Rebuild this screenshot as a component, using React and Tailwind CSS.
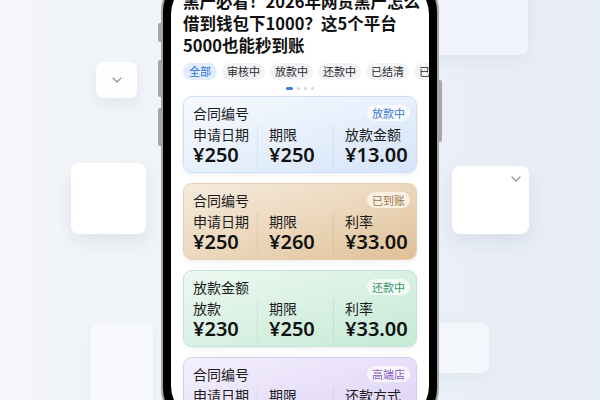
import React from "react";

const cjk = { fontFamily: '"Noto Sans CJK SC", "Noto Sans", sans-serif' };
const num = { fontFamily: '"Noto Sans", "Noto Sans CJK SC", sans-serif' };

function Chevron({ className }) {
  return (
    <svg className={className} width="10" height="6" viewBox="0 0 10 6" fill="none">
      <polyline points="1,1 5,5 9,1" stroke="#8f959d" strokeWidth="1.2" strokeLinecap="round" strokeLinejoin="round" />
    </svg>
  );
}

const cards = [
  {
    title: "合同编号",
    badge: "放款中",
    badgeCls: "text-[#3a78d4] bg-white/75",
    cls: "bg-gradient-to-br from-[#f7faff] via-[#e7f0fc] to-[#d4e4f9] border-[#cddff5]",
    cols: [["申请日期", "¥250"], ["期限", "¥250"], ["放款金额", "¥13.00"]],
  },
  {
    title: "合同编号",
    badge: "已到账",
    badgeCls: "text-[#9a7448] bg-[#fbf4ea]/85",
    cls: "bg-gradient-to-br from-[#f5ebdd] via-[#ecd8bd] to-[#dfc096] border-[#e6cfae]",
    cols: [["申请日期", "¥250"], ["期限", "¥260"], ["利率", "¥33.00"]],
  },
  {
    title: "放款金额",
    badge: "还款中",
    badgeCls: "text-[#3c9563] bg-white/70",
    cls: "bg-gradient-to-br from-[#edf8f2] via-[#d9f1e4] to-[#c5ead5] border-[#c0e4d0]",
    cols: [["放款", "¥230"], ["期限", "¥250"], ["利率", "¥33.00"]],
  },
  {
    title: "合同编号",
    badge: "高端店",
    badgeCls: "text-[#8a5cc6] bg-white/70",
    cls: "bg-gradient-to-br from-[#f4f0fd] via-[#e8e0f9] to-[#dcd0f5] border-[#d8cbf0]",
    cols: [["申请日期", "¥250"], ["期限", "¥250"], ["还款方式", "¥33.00"]],
  },
];

function Card({ c }) {
  return (
    <div className={`h-[77px] shrink-0 rounded-[9px] border px-[9px] pt-[7px] pb-[6px] shadow-[0_2px_4px_rgba(60,80,110,0.08)] ${c.cls}`}>
      <div className="flex h-[18px] items-center justify-between">
        <span className="text-[14px] leading-[18px] text-[#1c1c1c]" style={cjk}>{c.title}</span>
        <span className={`mr-[-3px] rounded-full px-[5px] text-[11px] leading-[16px] ${c.badgeCls}`} style={cjk}>{c.badge}</span>
      </div>
      <div className="mt-[3px] grid grid-cols-[64px_76px_1fr]">
        {c.cols.map(([l, v], i) => (
          <div key={i} className={i === 0 ? "" : "border-l border-black/[0.06] pl-[11px]"}>
            <div className="text-[14px] leading-[18px] text-[#1c1c1c]" style={cjk}>{l}</div>
            <div className="text-[20px] font-semibold leading-[24px] text-[#111]" style={num}>{v}</div>
          </div>
        ))}
      </div>
    </div>
  );
}

export default function App() {
  const tabs = ["审核中", "放款中", "还款中", "已结清", "已逾期"];
  return (
    <div className="relative flex h-[400px] w-[600px] justify-center overflow-hidden bg-gradient-to-r from-[#f4f6f9] via-[#eef2f7] to-[#e7edf6]">
      {/* decorative floating tiles */}
      <div className="absolute left-[96px] top-[62px] flex h-[36px] w-[41px] items-center justify-center rounded-[7px] bg-white/90 shadow-[0_6px_14px_rgba(120,140,170,0.14)]">
        <Chevron />
      </div>
      <div className="absolute left-[71px] top-[163px] h-[71px] w-[75px] rounded-[8px] bg-white shadow-[0_8px_18px_rgba(120,140,170,0.16)]" />
      <div className="absolute left-[91px] top-[323px] h-[90px] w-[62px] rounded-[8px] bg-[#f7f9fc] shadow-[0_6px_16px_rgba(120,140,170,0.08)]" />
      <div className="absolute left-[420px] top-[-20px] h-[75px] w-[108px] rounded-[8px] bg-[#f0f4fa] shadow-[0_6px_16px_rgba(120,140,170,0.1)]" />
      <div className="absolute left-[452px] top-[166px] h-[68px] w-[77px] rounded-[8px] bg-white shadow-[0_8px_18px_rgba(120,140,170,0.16)]">
        <Chevron className="absolute right-[8px] top-[10px]" />
      </div>
      <div className="absolute left-[430px] top-[323px] h-[50px] w-[59px] rounded-[7px] bg-[#f3f6fb] shadow-[0_6px_16px_rgba(120,140,170,0.08)]" />

      {/* phone */}
      <div className="relative -mt-[30px] h-[460px] w-[278px] shrink-0 rounded-[42px] border-2 border-[#a4a4a4] bg-black p-[8px]">
        <div className="absolute left-[-5px] top-[51px] h-[19px] w-[3px] rounded-l-[2px] bg-[#a8a8a8]" />
        <div className="absolute left-[-5px] top-[88px] h-[37px] w-[3px] rounded-l-[2px] bg-[#a8a8a8]" />
        <div className="absolute left-[-5px] top-[136px] h-[38px] w-[3px] rounded-l-[2px] bg-[#a8a8a8]" />
        <div className="absolute right-[-5px] top-[108px] h-[62px] w-[3px] rounded-r-[2px] bg-[#a8a8a8]" />

        <div className="flex h-full w-full flex-col overflow-hidden rounded-[34px] bg-white px-[12px] pt-[10px]">
          <div className="whitespace-nowrap text-[16.5px] font-bold leading-[22px] text-[#111]" style={cjk}>
            黑产必看！2026年网贷黑产怎么
            <br />
            借到钱包下1000？这5个平台
            <br />
            5000也能秒到账
          </div>

          <div className="mt-[7px] flex gap-[5px] whitespace-nowrap">
            <span className="shrink-0 rounded-full bg-[#e2edfb] px-[6px] text-[11px] leading-[17px] text-[#2f6fd6]" style={cjk}>全部</span>
            {tabs.map((t) => (
              <span key={t} className="shrink-0 rounded-full bg-[#f2f3f5] px-[5px] text-[11px] leading-[17px] text-[#2a2a2a]" style={cjk}>{t}</span>
            ))}
          </div>

          <div className="mt-[7px] flex items-center justify-center gap-[4px]">
            <span className="h-[3px] w-[7px] rounded-full bg-[#3b7be0]" />
            <span className="h-[3px] w-[3px] rounded-full bg-[#d3d7dd]" />
            <span className="h-[3px] w-[3px] rounded-full bg-[#d3d7dd]" />
            <span className="h-[3px] w-[3px] rounded-full bg-[#d3d7dd]" />
          </div>

          <div className="mt-[6px] flex flex-col gap-[10px]">
            {cards.map((c, i) => (
              <Card key={i} c={c} />
            ))}
          </div>
        </div>
      </div>
    </div>
  );
}
